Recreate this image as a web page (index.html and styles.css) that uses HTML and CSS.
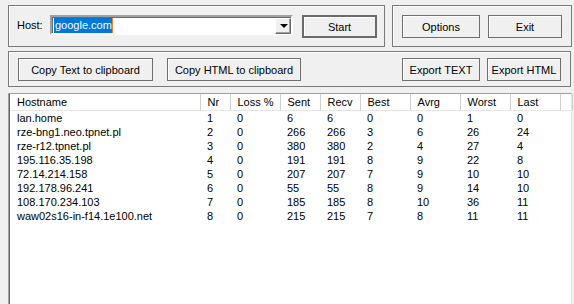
FILE: index.html
```html
<!DOCTYPE html>
<html lang="en">

<head>
    <meta charset="UTF-8">
    <title>WinMTR</title>
    <link rel="stylesheet" href="styles.css">
</head>

<body>
    <div class="window">
        <div class="top-row">
            <div class="group host-group">
                <label class="host-label" for="host">Host:</label>
                <div class="combo">
                    <div class="combo-text"><span class="selected">google.com</span><span class="caret"></span></div>
                    <div class="combo-arrow"><span class="arrow"></span></div>
                </div>
                <button class="btn default start">Start</button>
            </div>
            <div class="group action-group">
                <button class="btn options">Options</button>
                <button class="btn exit">Exit</button>
            </div>
        </div>

        <div class="group export-group">
            <button class="btn copy-text">Copy Text to clipboard</button>
            <button class="btn copy-html">Copy HTML to clipboard</button>
            <div class="spacer"></div>
            <button class="btn export-text">Export TEXT</button>
            <button class="btn export-html">Export HTML</button>
        </div>

        <div class="listview">
            <table class="report">
                <colgroup>
                    <col class="c-host">
                    <col class="c-nr">
                    <col class="c-loss">
                    <col class="c-sent">
                    <col class="c-recv">
                    <col class="c-best">
                    <col class="c-avrg">
                    <col class="c-worst">
                    <col class="c-last">
                    <col class="c-fill">
                </colgroup>
                <thead>
                    <tr>
                        <th>Hostname</th>
                        <th>Nr</th>
                        <th>Loss %</th>
                        <th>Sent</th>
                        <th>Recv</th>
                        <th>Best</th>
                        <th>Avrg</th>
                        <th>Worst</th>
                        <th>Last</th>
                        <th></th>
                    </tr>
                </thead>
                <tbody id="rows"></tbody>
            </table>
        </div>
    </div>

    <script>
        const hops = [
            ["lan.home", 1, 0, 6, 6, 0, 0, 1, 0],
            ["rze-bng1.neo.tpnet.pl", 2, 0, 266, 266, 3, 6, 26, 24],
            ["rze-r12.tpnet.pl", 3, 0, 380, 380, 2, 4, 27, 4],
            ["195.116.35.198", 4, 0, 191, 191, 8, 9, 22, 8],
            ["72.14.214.158", 5, 0, 207, 207, 7, 9, 10, 10],
            ["192.178.96.241", 6, 0, 55, 55, 8, 9, 14, 10],
            ["108.170.234.103", 7, 0, 185, 185, 8, 10, 36, 11],
            ["waw02s16-in-f14.1e100.net", 8, 0, 215, 215, 7, 8, 11, 11]
        ];

        const tbody = document.getElementById("rows");
        hops.forEach(function (hop) {
            const tr = document.createElement("tr");
            hop.forEach(function (value) {
                const td = document.createElement("td");
                td.textContent = value;
                tr.appendChild(td);
            });
            tr.appendChild(document.createElement("td"));
            tbody.appendChild(tr);
        });
    </script>
</body>

</html>
```

FILE: styles.css
```css
body {
    margin: 0;
    background: #f0f0f0;
    font-family: "Liberation Sans", Arial, sans-serif;
    font-size: 11px;
    color: #000;
    overflow: hidden;
}

.window {
    padding: 5px 3px 0 8px;
    display: flex;
    flex-direction: column;
    height: 310px;
}

.top-row {
    display: flex;
    gap: 7px;
}

.group {
    border: 1px solid #7a7a7a;
    box-shadow: inset 1px 1px 0 #fff;
    display: flex;
    align-items: flex-start;
}

.host-group {
    width: 375px;
    padding: 9px 7px 8px 8px;
}

.action-group {
    flex: 1;
    padding: 9px 9px 8px 9px;
    gap: 8px;
}

.host-label {
    margin-top: 4px;
    width: 33px;
}

.combo {
    width: 239px;
    height: 16px;
    background: #fff;
    border: 2px solid;
    border-color: #a0a0a0 #fff #fff #a0a0a0;
    box-shadow: inset 1px 1px 0 #696969;
    display: flex;
    margin-right: 9px;
}

.combo-text {
    flex: 1;
    padding: 1px 0 0 2px;
    display: flex;
    align-items: flex-start;
}

.selected {
    background: #0078d7;
    color: #fff;
    line-height: 15px;
    padding-left: 1px;
}

.caret {
    width: 1px;
    height: 15px;
    background: #ff7f27;
}

.combo-arrow {
    width: 14px;
    height: 14px;
    margin: 1px 0 0 0;
    background: #f0f0f0;
    border: 1px solid;
    border-color: #fff #696969 #696969 #fff;
    box-shadow: inset -1px -1px 0 #a0a0a0;
    display: flex;
    align-items: center;
    justify-content: center;
}

.arrow {
    width: 0;
    height: 0;
    border-left: 4px solid transparent;
    border-right: 4px solid transparent;
    border-top: 4px solid #000;
    margin-left: 1px;
}

.btn {
    font-family: "Liberation Sans", Arial, sans-serif;
    font-size: 11px;
    color: #000;
    height: 23px;
    padding: 0;
    background: #f0f0f0;
    border: 1px solid #6e6e6e;
    box-shadow: inset 1px 1px 0 #fff;
}

.btn.default {
    border: 2px solid #6a6a6a;
}

.start {
    width: 75px;
}

.options {
    width: 78px;
}

.exit {
    width: 74px;
}

.export-group {
    margin-top: 4px;
    padding: 6px 9px 5px 9px;
}

.copy-text {
    width: 135px;
    margin-right: 14px;
}

.copy-html {
    width: 134px;
}

.spacer {
    flex: 1;
}

.export-text {
    width: 78px;
    margin-right: 7px;
}

.export-html {
    width: 74px;
}

.listview {
    margin-top: 6px;
    margin-right: -1px;
    flex: 1;
    background: #fff;
    border: 1px solid;
    border-color: #a0a0a0 #e3e3e3 #e3e3e3 #a0a0a0;
    box-shadow: inset 1px 0 0 #696969;
    padding-left: 1px;
}

.report {
    border-collapse: collapse;
    table-layout: fixed;
    width: 562px;
}

.c-host { width: 190px; }
.c-nr { width: 30px; }
.c-loss { width: 50px; }
.c-sent { width: 40px; }
.c-recv { width: 40px; }
.c-best { width: 50px; }
.c-avrg { width: 50px; }
.c-worst { width: 50px; }
.c-last { width: 50px; }
.c-fill { width: 12px; }

.report th {
    height: 16px;
    font-weight: normal;
    text-align: left;
    padding: 0 0 0 7px;
    border-right: 1px solid #d0d0d0;
    border-bottom: 1px solid #e5e5e5;
    white-space: nowrap;
    overflow: hidden;
}

.report td {
    height: 14px;
    padding: 0 0 0 7px;
    line-height: 14px;
    white-space: nowrap;
    overflow: hidden;
}
```
